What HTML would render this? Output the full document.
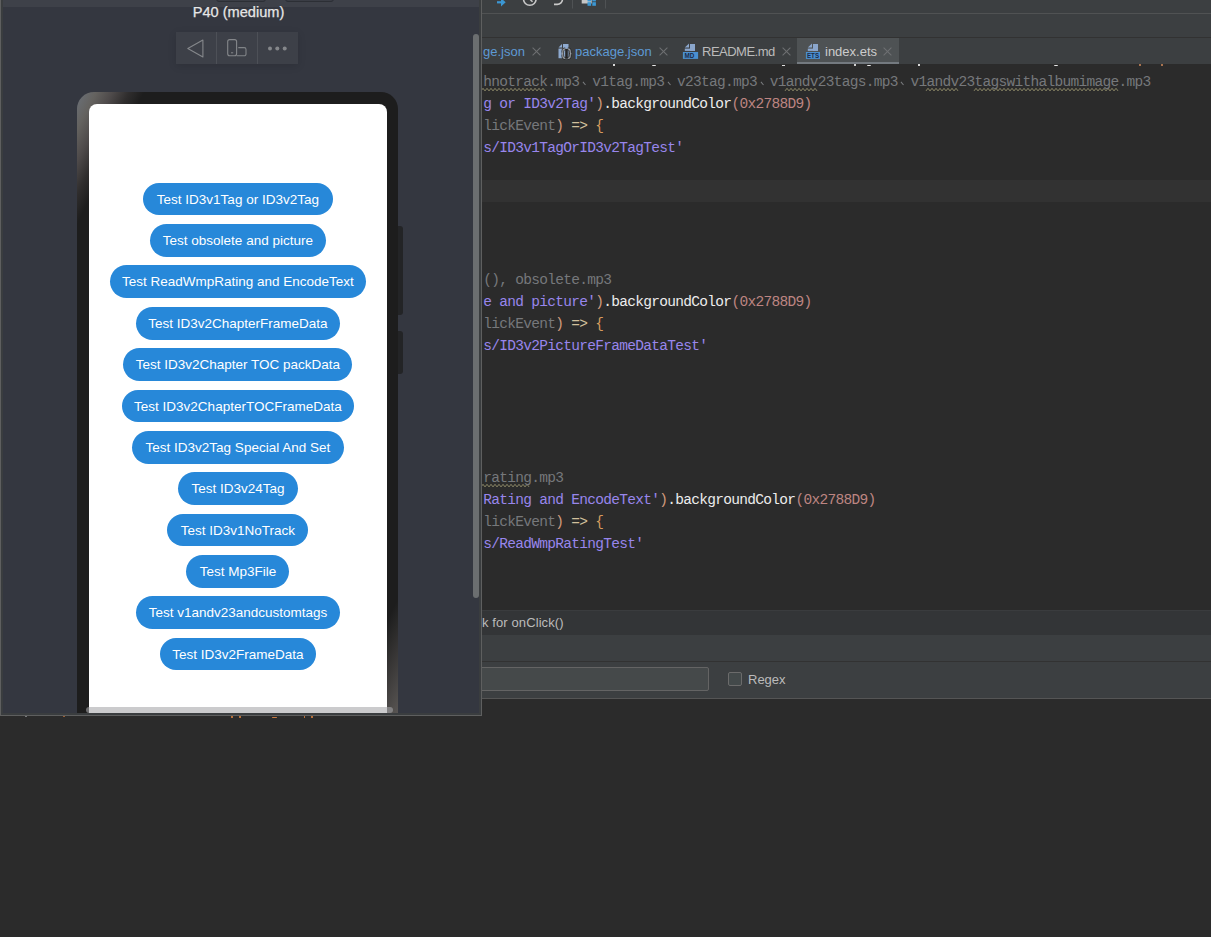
<!DOCTYPE html>
<html><head><meta charset="utf-8">
<style>
*{box-sizing:border-box;margin:0;padding:0}
html,body{width:1211px;height:937px;overflow:hidden;background:#2b2b2b;font-family:"Liberation Sans",sans-serif}
.abs{position:absolute}
/* IDE */
#tb{left:481px;top:0;width:730px;height:14px;background:#3c3f41;border-bottom:1px solid #505253}
#bar2{left:481px;top:14px;width:730px;height:24px;background:#3c3f41;border-bottom:1px solid #323232}
#tabs{left:481px;top:38px;width:730px;height:26px;background:#3c3f41}
#editor{left:481px;top:64px;width:730px;height:546px;background:#2b2b2b;overflow:hidden}

.code{position:absolute;left:2.3px;margin-top:1.4px;font-family:"Liberation Mono",monospace;font-size:14.5px;letter-spacing:-0.7px;white-space:pre;line-height:22px;height:22px}
.p{color:#9886ec}.w{color:#ededed}.o{color:#cf9a7c}.n{color:#bd8582}.g{color:#76787b}.b{color:#d69c5e}.y{color:#d2c09c}
.sq{text-decoration:underline wavy #8c8760;text-decoration-thickness:1px;text-underline-offset:3px}
.dun{display:inline-block;width:12.8px;height:10px;position:relative;vertical-align:baseline}
.dun:after{content:"";position:absolute;left:2.6px;bottom:2px;width:4.4px;height:1.4px;background:#7c7e81;transform:rotate(50deg)}

#hint{left:481px;top:610px;width:730px;height:25px;background:#333537;border-top:1px solid #3a3c3e;color:#bbbbbb;font-size:13px}
#bar3{left:481px;top:635px;width:730px;height:27px;background:#3c3f41;border-bottom:1px solid #323232}
#find{left:481px;top:662px;width:730px;height:37px;background:#3c3f41;border-bottom:1px solid #555555}
/* previewer */

#pv{left:0;top:0;width:482px;height:716px;background:#343740;overflow:hidden}
#title{left:0;top:3.6px;width:477px;text-align:center;color:#e6e6e6;font-size:14.6px;line-height:16px;-webkit-text-stroke:0.25px #e6e6e6}
#grp{left:176px;top:32px;width:122px;height:32px;background:#3d4048;box-shadow:0 2px 8px rgba(0,0,0,0.12)}
#sb{left:473px;top:34px;width:6px;height:564px;background:#6b6e70;border-radius:3px}
#phone{left:77px;top:92px;width:321px;height:640px;border-radius:17px;background:linear-gradient(117deg,#6b7179 0%,#64625f 3%,#4e4a4a 5.5%,#302e2e 8%,#1d1d1d 10.4%,#1d1d1d 89.5%,#625e5c 100%)}
#screen{left:89px;top:104px;width:298px;height:620px;border-radius:8px;background:#fff}
.btn{position:absolute;height:32.8px;border-radius:17px;background:#2788d9;color:#fff;font-size:13.5px;line-height:34.4px;text-align:center;white-space:nowrap}
#hsb{left:86px;top:707px;width:307px;height:6px;background:rgba(166,166,170,0.59);border-radius:3px}

.tabt{position:absolute;top:6px;font-size:13px;line-height:16px;white-space:nowrap}
.tx{position:absolute;top:9.5px;width:8px;height:8px}
.tx:before,.tx:after{content:"";position:absolute;left:-1.5px;top:3.5px;width:11px;height:1px;background:#6f7173;transform:rotate(45deg)}
.tx:after{transform:rotate(-45deg)}
</style></head><body>
<div id="tb" class="abs">
  <svg class="abs" style="left:0;top:0" width="730" height="14" viewBox="0 0 730 14">
    <path d="M16 2.3 h5" stroke="#3b97d3" stroke-width="2.2"/>
    <path d="M20 -1.9 L24.7 2.3 L20 6.5 Z" fill="#3b97d3"/>
    <circle cx="48.8" cy="-1" r="6.3" fill="none" stroke="#c9c9c9" stroke-width="1.6"/>
    <path d="M48.8 -1 L51.5 1.8" stroke="#c9c9c9" stroke-width="1.5"/>
    <path d="M73 4.4 h3.2 a5.3 5.3 0 0 0 5.3 -5.3" fill="none" stroke="#c9c9c9" stroke-width="1.6"/>
    <rect x="91" y="0" width="1" height="8.5" fill="#4f5254"/>
    <rect x="100.7" y="-4" width="10" height="7.5" fill="#c6c6c6"/>
    <rect x="106.5" y="2.2" width="3.6" height="3.6" fill="#3b97d3"/>
    <rect x="111.3" y="2.2" width="3.6" height="3.6" fill="#3b97d3"/>
    <rect x="106.5" y="-2.2" width="3.6" height="3.6" fill="#3b97d3"/>
    <rect x="111.3" y="-2.2" width="3.6" height="3.6" fill="#3b97d3"/>
    <rect x="124" y="0" width="1" height="8.5" fill="#4f5254"/>
  </svg>
</div>
<div id="bar2" class="abs"></div>
<div id="tabs" class="abs">
  <div class="tabt" style="left:2px;color:#5e9ad4">ge.json</div>
  <div class="tx" style="left:51px"></div>
  <svg class="abs" style="left:76px;top:5px" width="16" height="17" viewBox="0 0 16 17">
    <path d="M1.5 4.5 L5 1 V4.5 Z" fill="#8eaad0"/>
    <rect x="6" y="1" width="5.5" height="4.8" fill="#8eaad0"/>
    <rect x="1.5" y="5.6" width="10" height="9.6" fill="#8eaad0"/>
    <path d="M8.2 5.8 q-2.4 0 -2.4 2.4 v1.4 q0 1 -1.1 1 q1.1 0 1.1 1 v1.4 q0 2.4 2.4 2.4 M10.8 5.8 q2.4 0 2.4 2.4 v1.4 q0 1 1.1 1 q-1.1 0 -1.1 1 v1.4 q0 2.4 -2.4 2.4 M9.5 6 v9.5" fill="none" stroke="#262626" stroke-width="2.6"/>
    <path d="M8.2 5.8 q-2.4 0 -2.4 2.4 v1.4 q0 1 -1.1 1 q1.1 0 1.1 1 v1.4 q0 2.4 2.4 2.4 M10.8 5.8 q2.4 0 2.4 2.4 v1.4 q0 1 1.1 1 q-1.1 0 -1.1 1 v1.4 q0 2.4 -2.4 2.4" fill="none" stroke="#9a9ea4" stroke-width="1.2"/>
  </svg>
  <div class="tabt" style="left:94px;color:#5e9ad4">package.json</div>
  <div class="tx" style="left:178px"></div>
  <svg class="abs" style="left:201px;top:2px" width="18" height="20" viewBox="0 0 18 20">
    <path d="M2.8 7.6 L7 3.6 V7.6 Z" fill="#8aa6cc"/>
    <rect x="8" y="4" width="5" height="6.9" fill="#8aa6cc"/>
    <rect x="2.8" y="8.6" width="10.2" height="2.3" fill="#8aa6cc"/>
    <rect x="0.9" y="12" width="15.2" height="6.9" fill="#4a8fd0"/>
    <text x="2.4" y="18" font-family="Liberation Sans" font-size="7.4" font-weight="bold" fill="#1c2a48" textLength="9.8" lengthAdjust="spacingAndGlyphs">MD</text>
  </svg>
  <div class="tabt" style="left:221px;color:#bbbbbb;letter-spacing:-0.5px">README.md</div>
  <div class="tx" style="left:301px"></div>
  <div class="abs" style="left:316px;top:0;width:102px;height:26px;background:#4e5254"></div>
  <div class="abs" style="left:316px;top:24px;width:102px;height:2.7px;background:#747a80"></div>
  <svg class="abs" style="left:324px;top:2px" width="18" height="20" viewBox="0 0 18 20">
    <path d="M2.8 7.6 L7 3.6 V7.6 Z" fill="#8aa6cc"/>
    <rect x="8" y="4" width="5" height="6.9" fill="#8aa6cc"/>
    <rect x="2.8" y="8.6" width="10.2" height="2.3" fill="#8aa6cc"/>
    <rect x="0.9" y="12" width="14.1" height="6.9" fill="#4a8fd0"/>
    <text x="2" y="18" font-family="Liberation Sans" font-size="7.4" font-weight="bold" fill="#1c2a48" textLength="12" lengthAdjust="spacingAndGlyphs">ETS</text>
  </svg>
  <div class="tabt" style="left:344px;color:#cccccc">index.ets</div>
  <div class="tx" style="left:402px"></div>
</div>
<div id="editor" class="abs">
  <div class="abs" style="left:0;top:116px;width:730px;height:22px;background:#323232"></div>
  <svg class="abs" style="left:0;top:0" width="730" height="546"><polyline points="0.0,26.9 2.0,24.3 4.0,26.9 6.0,24.3 8.0,26.9 10.0,24.3 12.0,26.9 14.0,24.3 16.0,26.9 18.0,24.3 20.0,26.9 22.0,24.3 24.0,26.9 26.0,24.3 28.0,26.9 30.0,24.3 32.0,26.9 34.0,24.3 36.0,26.9 38.0,24.3 40.0,26.9 42.0,24.3 44.0,26.9 46.0,24.3 48.0,26.9 50.0,24.3 52.0,26.9 54.0,24.3 56.0,26.9 58.0,24.3 60.0,26.9 62.0,24.3 64.0,26.9" fill="none" stroke="#8b8766" stroke-width="1"/><polyline points="304.0,26.9 306.0,24.3 308.0,26.9 310.0,24.3 312.0,26.9 314.0,24.3 316.0,26.9 318.0,24.3 320.0,26.9 322.0,24.3 324.0,26.9 326.0,24.3 328.0,26.9 330.0,24.3 332.0,26.9 334.0,24.3 336.0,26.9" fill="none" stroke="#8b8766" stroke-width="1"/><polyline points="445.0,26.9 447.0,24.3 449.0,26.9 451.0,24.3 453.0,26.9 455.0,24.3 457.0,26.9 459.0,24.3 461.0,26.9 463.0,24.3 465.0,26.9 467.0,24.3 469.0,26.9 471.0,24.3 473.0,26.9 475.0,24.3 477.0,26.9" fill="none" stroke="#8b8766" stroke-width="1"/><polyline points="493.0,26.9 495.0,24.3 497.0,26.9 499.0,24.3 501.0,26.9 503.0,24.3 505.0,26.9 507.0,24.3 509.0,26.9 511.0,24.3 513.0,26.9 515.0,24.3 517.0,26.9 519.0,24.3 521.0,26.9 523.0,24.3 525.0,26.9 527.0,24.3 529.0,26.9 531.0,24.3 533.0,26.9 535.0,24.3 537.0,26.9 539.0,24.3 541.0,26.9 543.0,24.3 545.0,26.9 547.0,24.3 549.0,26.9 551.0,24.3 553.0,26.9 555.0,24.3 557.0,26.9 559.0,24.3 561.0,26.9 563.0,24.3 565.0,26.9 567.0,24.3 569.0,26.9 571.0,24.3 573.0,26.9 575.0,24.3 577.0,26.9 579.0,24.3 581.0,26.9 583.0,24.3 585.0,26.9 587.0,24.3 589.0,26.9 591.0,24.3 593.0,26.9 595.0,24.3 597.0,26.9 599.0,24.3 601.0,26.9 603.0,24.3 605.0,26.9 607.0,24.3 609.0,26.9 611.0,24.3 613.0,26.9 615.0,24.3 617.0,26.9 619.0,24.3 621.0,26.9 623.0,24.3 625.0,26.9 627.0,24.3 629.0,26.9 631.0,24.3 633.0,26.9 635.0,24.3 637.0,26.9" fill="none" stroke="#8b8766" stroke-width="1"/><polyline points="0.0,422.9 2.0,420.3 4.0,422.9 6.0,420.3 8.0,422.9 10.0,420.3 12.0,422.9 14.0,420.3 16.0,422.9 18.0,420.3 20.0,422.9 22.0,420.3 24.0,422.9 26.0,420.3 28.0,422.9 30.0,420.3 32.0,422.9 34.0,420.3 36.0,422.9 38.0,420.3 40.0,422.9 42.0,420.3 44.0,422.9 46.0,420.3 48.0,422.9" fill="none" stroke="#8b8766" stroke-width="1"/></svg>
  <div class="code" style="top:6px"><span class="g">hnotrack.mp3</span><span class="dun"></span><span class="g">v1tag.mp3</span><span class="dun"></span><span class="g">v23tag.mp3</span><span class="dun"></span><span class="g">v1andv23tags.mp3</span><span class="dun"></span><span class="g">v1andv23tagswithalbumimage.mp3</span></div>
  <div class="code" style="top:28px"><span class="p">g or ID3v2Tag'</span><span class="o">)</span><span class="w">.backgroundColor</span><span class="n">(0x2788D9)</span></div>
  <div class="code" style="top:50px"><span class="g">lickEvent</span><span class="o">)</span><span class="y"> =&gt; </span><span class="b">{</span></div>
  <div class="code" style="top:72px"><span class="p">s/ID3v1TagOrID3v2TagTest'</span></div>
  <div class="code" style="top:204px"><span class="g">(), obsolete.mp3</span></div>
  <div class="code" style="top:226px"><span class="p">e and picture'</span><span class="o">)</span><span class="w">.backgroundColor</span><span class="n">(0x2788D9)</span></div>
  <div class="code" style="top:248px"><span class="g">lickEvent</span><span class="o">)</span><span class="y"> =&gt; </span><span class="b">{</span></div>
  <div class="code" style="top:270px"><span class="p">s/ID3v2PictureFrameDataTest'</span></div>
  <div class="code" style="top:402px"><span class="g">rating.mp3</span></div>
  <div class="code" style="top:424px"><span class="p">Rating and EncodeText'</span><span class="o">)</span><span class="w">.backgroundColor</span><span class="n">(0x2788D9)</span></div>
  <div class="code" style="top:446px"><span class="g">lickEvent</span><span class="o">)</span><span class="y"> =&gt; </span><span class="b">{</span></div>
  <div class="code" style="top:468px"><span class="p">s/ReadWmpRatingTest'</span></div>
</div>
<div id="hint" class="abs"><span style="position:absolute;left:1px;top:4px;line-height:16px;letter-spacing:0.1px">k for onClick()</span></div>
<div id="bar3" class="abs"></div>
<div id="find" class="abs">
  <div class="abs" style="left:-10px;top:5px;width:238px;height:24px;background:#45494a;border:1px solid #646464;border-radius:2px"></div>
  <div class="abs" style="left:247px;top:10px;width:14px;height:14px;background:#43494a;border:1px solid #6b6b6b;border-radius:2px"></div>
  <div class="abs" style="left:267px;top:10px;font-size:13px;line-height:16px;color:#bbbbbb">Regex</div>
</div>
<div id="pv" class="abs">
  <div class="abs" style="left:0;top:0;width:480px;height:7px;background:#3e4149"></div>
  <div class="abs" style="left:216px;top:-4px;width:50px;height:6px;border:1px solid #2c2f35;border-radius:3px;background:#3a3d45"></div>
  <div class="abs" style="left:285px;top:-4px;width:49px;height:6px;border:1px solid #2c2f35;border-radius:3px;background:#3a3d45"></div>
  <div class="abs" id="title">P40 (medium)</div>
  <div class="abs" id="grp">
    <div class="abs" style="left:40px;top:0;width:1px;height:32px;background:#4d5057"></div>
    <div class="abs" style="left:81px;top:0;width:1px;height:32px;background:#4d5057"></div>
    <svg class="abs" style="left:0;top:0" width="122" height="32" viewBox="0 0 122 32">
      <path d="M11.8 16.5 L26.9 8 L26.9 25 Z" fill="none" stroke="#85878b" stroke-width="1.1" stroke-linejoin="round"/>
      <rect x="51.7" y="7.6" width="8.9" height="16.2" rx="2" fill="none" stroke="#85878b" stroke-width="1.1"/>
      <path d="M55 20.8 h2.2" stroke="#85878b" stroke-width="1"/>
      <path d="M62.3 15.6 h5.9 a1.8 1.8 0 0 1 1.8 1.8 v4.6 a1.8 1.8 0 0 1 -1.8 1.8 h-7.6" fill="none" stroke="#818488" stroke-width="1.1"/>
      <circle cx="94" cy="16.6" r="2" fill="#85878b"/>
      <circle cx="101.3" cy="16.6" r="2" fill="#85878b"/>
      <circle cx="108.7" cy="16.6" r="2" fill="#85878b"/>
    </svg>
  </div>
  <div class="abs" id="sb"></div>
  <div class="abs" style="left:397px;top:226px;width:6px;height:89px;background:#232426;border-radius:0 3px 3px 0"></div>
  <div class="abs" style="left:397px;top:331px;width:6px;height:43px;background:#232426;border-radius:0 3px 3px 0"></div>
  <div class="abs" id="phone"></div>
  <div class="abs" id="screen"></div>
<div class="btn" style="left:142.9px;top:182.7px;width:190.0px">Test ID3v1Tag or ID3v2Tag</div>
<div class="btn" style="left:149.9px;top:224.1px;width:176.0px">Test obsolete and picture</div>
<div class="btn" style="left:109.9px;top:265.4px;width:256.0px">Test ReadWmpRating and EncodeText</div>
<div class="btn" style="left:135.9px;top:306.8px;width:204.0px">Test ID3v2ChapterFrameData</div>
<div class="btn" style="left:123.4px;top:348.1px;width:229.0px">Test ID3v2Chapter TOC packData</div>
<div class="btn" style="left:121.9px;top:389.5px;width:232.0px">Test ID3v2ChapterTOCFrameData</div>
<div class="btn" style="left:132.1px;top:430.9px;width:211.6px">Test ID3v2Tag Special And Set</div>
<div class="btn" style="left:177.6px;top:472.2px;width:120.7px">Test ID3v24Tag</div>
<div class="btn" style="left:167.4px;top:513.6px;width:141.0px">Test ID3v1NoTrack</div>
<div class="btn" style="left:186.4px;top:554.9px;width:103.0px">Test Mp3File</div>
<div class="btn" style="left:136.2px;top:596.3px;width:203.5px">Test v1andv23andcustomtags</div>
<div class="btn" style="left:159.5px;top:637.7px;width:156.8px">Test ID3v2FrameData</div>
  <div class="abs" id="hsb"></div>
  <div class="abs" style="left:0;top:713px;width:482px;height:2px;background:#3a3d3f"></div>
  <div class="abs" style="left:1px;top:0;width:2px;height:715px;background:#3a3d3f"></div>
  <div class="abs" style="left:479px;top:0;width:2px;height:715px;background:#3a3d3f"></div>
  <div class="abs" style="left:0;top:0;width:1px;height:716px;background:#5e5f5f"></div>
  <div class="abs" style="left:481px;top:0;width:1px;height:716px;background:#5e5f5f"></div>
  <div class="abs" style="left:0;top:715px;width:482px;height:1px;background:#5e5f5f"></div>
</div>
<div class="abs" style="left:63px;top:716px;width:2px;height:1.3px;background:#9a6038"></div>
<div class="abs" style="left:25px;top:716px;width:2px;height:1.2px;background:#77797c"></div>
<div class="abs" style="left:231.3px;top:716px;width:1.5px;height:2px;background:#b8703a"></div>
<div class="abs" style="left:239.4px;top:716px;width:1.5px;height:2px;background:#b8703a"></div>
<div class="abs" style="left:272px;top:716.6px;width:4.5px;height:1.4px;background:#c97a40;border-radius:1px"></div>
<div class="abs" style="left:303.5px;top:716px;width:1.5px;height:2px;background:#b8703a"></div>
<div class="abs" style="left:311.4px;top:716px;width:1.5px;height:2px;background:#b8703a"></div>
<div class="abs" style="left:613px;top:64px;width:1.5px;height:1.5px;background:#d8d8d8"></div>
<div class="abs" style="left:652px;top:64.5px;width:4px;height:1.5px;background:#e8e8e8;border-radius:0 0 2px 2px"></div>
<div class="abs" style="left:782px;top:64.5px;width:3px;height:1.5px;background:#e0e0e0"></div>
<div class="abs" style="left:854px;top:64px;width:1.5px;height:1.5px;background:#d0d0d0"></div>
<div class="abs" style="left:867px;top:64.5px;width:4px;height:1.5px;background:#e8e8e8;border-radius:0 0 2px 2px"></div>
<div class="abs" style="left:918px;top:64px;width:1.5px;height:1.5px;background:#d8d8d8"></div>
<div class="abs" style="left:1054px;top:64.5px;width:4px;height:1.5px;background:#e8e8e8;border-radius:0 0 2px 2px"></div>
<div class="abs" style="left:1139px;top:64px;width:1.5px;height:1.5px;background:#a8734f"></div>
<div class="abs" style="left:1161px;top:64px;width:1.5px;height:1.5px;background:#a8734f"></div>
</body></html>
